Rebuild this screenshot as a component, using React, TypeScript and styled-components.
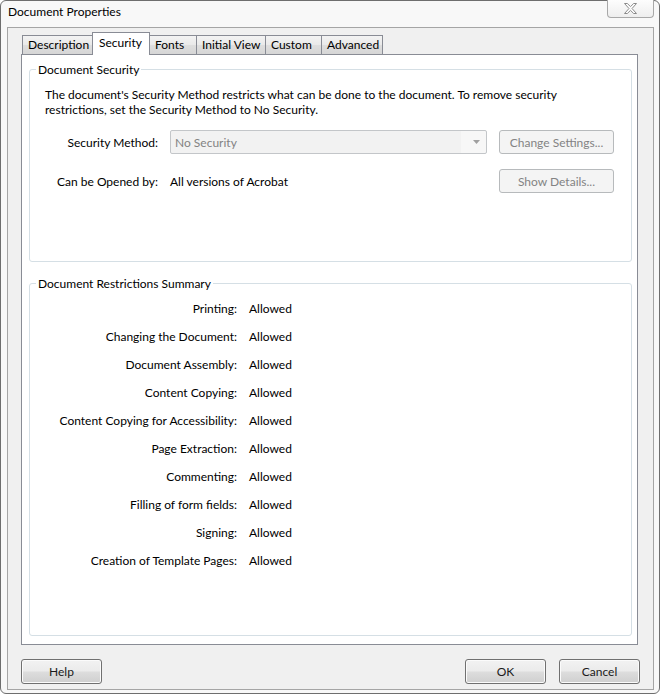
import React from "react";
import styled, { createGlobalStyle } from "styled-components";

const FONT = `"Lato", "Noto Sans", sans-serif`;

const Global = createGlobalStyle`
  html, body { margin: 0; padding: 0; background: #ffffff; }
  body { font-family: ${FONT}; font-size: 12px; color: #000; }
  * { box-sizing: border-box; }
`;

const Window = styled.div`
  width: 660px;
  height: 694px;
  border: 1px solid #6e6e6e;
  border-radius: 6px;
  background: #f8f8f8;
  display: flex;
  flex-direction: column;
`;

const TitleBar = styled.div`
  height: 26px;
  flex: none;
  display: flex;
  align-items: flex-start;
  justify-content: space-between;
  padding-left: 7px;
`;

const Title = styled.div`
  line-height: 15px;
  padding-top: 3px;
`;

const CloseButton = styled.div`
  width: 47px;
  height: 18px;
  margin-top: -1px;
  margin-right: 5px;
  border: 1px solid #a8a8a8;
  border-top: none;
  border-radius: 0 0 4px 4px;
  background: linear-gradient(#fdfdfd, #eeeeee);
  display: flex;
  align-items: center;
  justify-content: center;
`;

const Client = styled.div`
  flex: 1;
  margin: 0 5px 3px 6px;
  border: 1px solid #a5a5a5;
  background: #f0f0f0;
  display: flex;
  flex-direction: column;
  padding: 4px 13px 5px 13px;
`;

const TabStrip = styled.div`
  display: flex;
  align-items: flex-end;
  padding-left: 1px;
`;

const Tab = styled.div<{ $w: number; $active?: boolean }>`
  width: ${(p) => p.$w}px;
  height: ${(p) => (p.$active ? 23 : 19)}px;
  line-height: ${(p) => (p.$active ? 19 : 17)}px;
  margin-bottom: ${(p) => (p.$active ? -1 : 0)}px;
  margin-left: -1px;
  &:first-child { margin-left: 0; }
  padding-left: ${(p) => (p.$active ? 6 : 5)}px;
  border: 1px solid #898c95;
  border-bottom: none;
  white-space: nowrap;
  position: relative;
  z-index: ${(p) => (p.$active ? 2 : 1)};
  background: ${(p) =>
    p.$active ? "#ffffff" : "linear-gradient(#f3f3f3, #e9e9e9 50%, #dedede 51%, #d6d6d6)"};
`;

const Panel = styled.div`
  height: 591px;
  flex: none;
  margin-right: 2px;
  border: 1px solid #898c95;
  background: #ffffff;
  display: flex;
  flex-direction: column;
  padding: 7px 5px 8px 7px;
`;

const Group = styled.fieldset<{ $h?: number }>`
  margin: 0;
  min-width: 0;
  border: 1px solid #d5dfe5;
  border-radius: 3px;
  padding: 0 6px;
  ${(p) => (p.$h ? `height: ${p.$h}px; flex: none;` : "flex: 1;")}
`;

const GroupSpacer = styled.div`
  height: 14px;
  flex: none;
`;

const Legend = styled.legend`
  padding: 0 2px;
  line-height: 15px;
`;

const Para = styled.p`
  margin: 10px 0 0 9px;
  line-height: 15px;
  white-space: nowrap;
`;

const SettingsGrid = styled.div`
  margin-top: 13px;
  display: grid;
  grid-template-columns: 122px 317px 115px;
  grid-auto-rows: 24px;
  column-gap: 12px;
  row-gap: 15px;
  align-items: center;
`;

const FieldLabel = styled.div`
  text-align: right;
  white-space: nowrap;
`;

const Combo = styled.div`
  height: 24px;
  border: 1px solid #c3c6c9;
  border-radius: 2px;
  background: linear-gradient(to right, #f2f2f2 92%, #f7f7f7 92%);
  color: #838383;
  display: flex;
  align-items: center;
  justify-content: space-between;
  padding: 0 6px 0 4px;
`;

const DisabledButton = styled.div`
  height: 24px;
  border: 1px solid #b7babc;
  border-radius: 3px;
  background: #f4f4f4;
  color: #838383;
  display: flex;
  align-items: center;
  justify-content: center;
`;

const RestrictGrid = styled.div`
  padding-top: 3px;
  display: grid;
  grid-template-columns: 201px auto;
  column-gap: 12px;
  grid-auto-rows: 28px;
  align-items: center;
`;

const Value = styled.div`
  white-space: nowrap;
`;

const Footer = styled.div`
  margin-top: 14px;
  display: flex;
  gap: 13px;
`;

const Spacer = styled.div`
  flex: 1;
`;

const DialogButton = styled.div`
  width: 81px;
  height: 25px;
  border: 1px solid #707070;
  border-radius: 3px;
  box-shadow: inset 0 0 0 1px #fbfbfb;
  background: linear-gradient(#f2f2f2, #ebebeb 48%, #dddddd 52%, #cfcfcf);
  display: flex;
  align-items: center;
  justify-content: center;
  color: #1a1a1a;
`;

const tabs = [
  { label: "Description", w: 71 },
  { label: "Security", w: 58, active: true },
  { label: "Fonts", w: 48 },
  { label: "Initial View", w: 70 },
  { label: "Custom", w: 57 },
  { label: "Advanced", w: 62 },
];

const restrictions = [
  "Printing:",
  "Changing the Document:",
  "Document Assembly:",
  "Content Copying:",
  "Content Copying for Accessibility:",
  "Page Extraction:",
  "Commenting:",
  "Filling of form fields:",
  "Signing:",
  "Creation of Template Pages:",
];

export default function App() {
  return (
    <>
      <Global />
      <Window>
        <TitleBar>
          <Title>Document Properties</Title>
          <CloseButton>
            <svg width="13" height="11" viewBox="0 0 13 11">
              <path
                d="M0.5 0.5 H3.3 L6.5 3.6 L9.7 0.5 H12.5 L8 5.5 L12.5 10.5 H9.7 L6.5 7.4 L3.3 10.5 H0.5 L5 5.5 Z"
                fill="#ffffff"
                stroke="#8a8a8a"
                strokeWidth="1"
                strokeLinejoin="round"
              />
            </svg>
          </CloseButton>
        </TitleBar>
        <Client>
          <TabStrip>
            {tabs.map((t) => (
              <Tab key={t.label} $w={t.w} $active={t.active}>
                {t.label}
              </Tab>
            ))}
          </TabStrip>
          <Panel>
            <Group $h={200}>
              <Legend>Document Security</Legend>
              <Para>
                The document's Security Method restricts what can be done to the document. To remove security
                <br />
                restrictions, set the Security Method to No Security.
              </Para>
              <SettingsGrid>
                <FieldLabel>Security Method:</FieldLabel>
                <Combo>
                  <span>No Security</span>
                  <svg width="7" height="4" viewBox="0 0 7 4">
                    <path d="M0 0 H7 L3.5 4 Z" fill="#a0a0a0" />
                  </svg>
                </Combo>
                <DisabledButton>Change Settings...</DisabledButton>
                <FieldLabel>Can be Opened by:</FieldLabel>
                <Value>All versions of Acrobat</Value>
                <DisabledButton>Show Details...</DisabledButton>
              </SettingsGrid>
            </Group>
            <GroupSpacer />
            <Group>
              <Legend>Document Restrictions Summary</Legend>
              <RestrictGrid>
                {restrictions.map((r) => (
                  <React.Fragment key={r}>
                    <FieldLabel>{r}</FieldLabel>
                    <Value>Allowed</Value>
                  </React.Fragment>
                ))}
              </RestrictGrid>
            </Group>
          </Panel>
          <Footer>
            <DialogButton>Help</DialogButton>
            <Spacer />
            <DialogButton>OK</DialogButton>
            <DialogButton>Cancel</DialogButton>
          </Footer>
        </Client>
      </Window>
    </>
  );
}
